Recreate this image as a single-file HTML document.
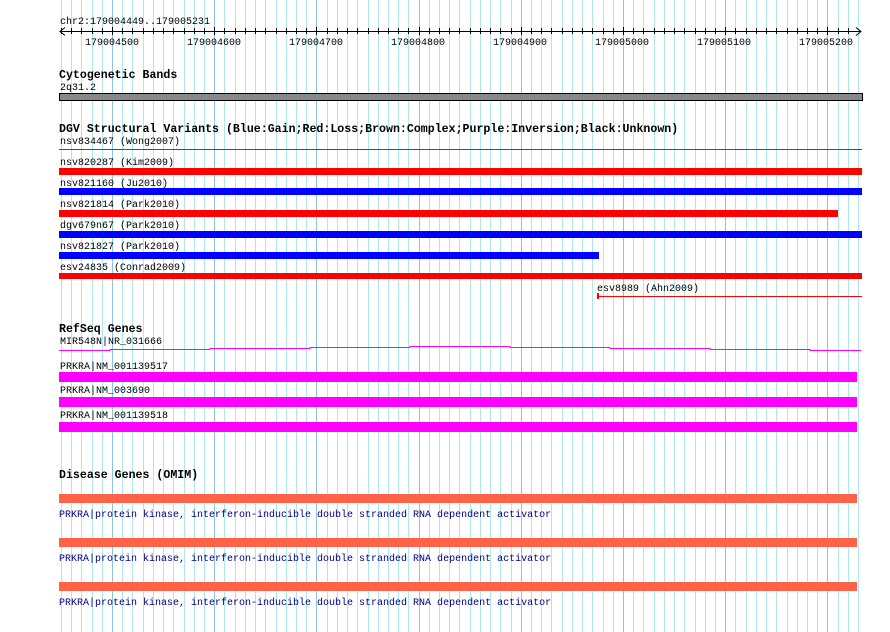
<!DOCTYPE html>
<html><head><meta charset="utf-8"><style>
html,body{margin:0;padding:0;background:#fff;width:890px;height:632px;overflow:hidden}
svg{display:block}
text{font-family:"Liberation Mono","DejaVu Sans Mono",monospace;font-size:10px;fill:#000}
.h{font-weight:bold;font-size:11.6px}
.d{fill:#000080}
</style></head><body>
<svg width="890" height="632" xmlns="http://www.w3.org/2000/svg">
<path stroke="#aee8ee" stroke-width="1" fill="none" d="M61.5 0V632M71.5 0V632M81.5 0V632M92.5 0V632M102.5 0V632M122.5 0V632M132.5 0V632M143.5 0V632M153.5 0V632M163.5 0V632M173.5 0V632M184.5 0V632M194.5 0V632M204.5 0V632M224.5 0V632M235.5 0V632M245.5 0V632M255.5 0V632M265.5 0V632M276.5 0V632M286.5 0V632M296.5 0V632M306.5 0V632M327.5 0V632M337.5 0V632M347.5 0V632M357.5 0V632M368.5 0V632M378.5 0V632M388.5 0V632M398.5 0V632M408.5 0V632M429.5 0V632M439.5 0V632M449.5 0V632M459.5 0V632M470.5 0V632M480.5 0V632M490.5 0V632M500.5 0V632M511.5 0V632M531.5 0V632M541.5 0V632M551.5 0V632M562.5 0V632M572.5 0V632M582.5 0V632M592.5 0V632M603.5 0V632M613.5 0V632M633.5 0V632M643.5 0V632M654.5 0V632M664.5 0V632M674.5 0V632M684.5 0V632M695.5 0V632M705.5 0V632M715.5 0V632M735.5 0V632M746.5 0V632M756.5 0V632M766.5 0V632M776.5 0V632M787.5 0V632M797.5 0V632M807.5 0V632M817.5 0V632M838.5 0V632M848.5 0V632M858.5 0V632"/>
<path stroke="#8cc4e4" stroke-width="1" fill="none" d="M112.5 0V632M214.5 0V632M316.5 0V632M419.5 0V632M521.5 0V632M623.5 0V632M725.5 0V632M827.5 0V632"/>
<path stroke="#000" stroke-width="1" fill="none" d="M61.5 28V34M71.5 28V34M81.5 28V34M92.5 28V34M102.5 28V34M112.5 27V35M122.5 28V34M132.5 28V34M143.5 28V34M153.5 28V34M163.5 28V34M173.5 28V34M184.5 28V34M194.5 28V34M204.5 28V34M214.5 27V35M224.5 28V34M235.5 28V34M245.5 28V34M255.5 28V34M265.5 28V34M276.5 28V34M286.5 28V34M296.5 28V34M306.5 28V34M316.5 27V35M327.5 28V34M337.5 28V34M347.5 28V34M357.5 28V34M368.5 28V34M378.5 28V34M388.5 28V34M398.5 28V34M408.5 28V34M419.5 27V35M429.5 28V34M439.5 28V34M449.5 28V34M459.5 28V34M470.5 28V34M480.5 28V34M490.5 28V34M500.5 28V34M511.5 28V34M521.5 27V35M531.5 28V34M541.5 28V34M551.5 28V34M562.5 28V34M572.5 28V34M582.5 28V34M592.5 28V34M603.5 28V34M613.5 28V34M623.5 27V35M633.5 28V34M643.5 28V34M654.5 28V34M664.5 28V34M674.5 28V34M684.5 28V34M695.5 28V34M705.5 28V34M715.5 28V34M725.5 27V35M735.5 28V34M746.5 28V34M756.5 28V34M766.5 28V34M776.5 28V34M787.5 28V34M797.5 28V34M807.5 28V34M817.5 28V34M827.5 27V35M838.5 28V34M848.5 28V34"/>
<text x="60" y="24">chr2:179004449..179005231</text>
<line x1="60" y1="31.5" x2="861" y2="31.5" stroke="#000"/>
<polyline points="65,27.5 60,31.5 65,35.5" fill="none" stroke="#000"/>
<polyline points="856,27.5 861,31.5 856,35.5" fill="none" stroke="#000"/>
<text x="85" y="45">179004500</text><text x="187" y="45">179004600</text><text x="289" y="45">179004700</text><text x="391" y="45">179004800</text><text x="493" y="45">179004900</text><text x="595" y="45">179005000</text><text x="697" y="45">179005100</text><text x="799" y="45">179005200</text>
<text class="h" x="59" y="78">Cytogenetic Bands</text>
<text x="60" y="90">2q31.2</text>
<rect x="59.5" y="93.5" width="803" height="7" fill="#888" stroke="#000"/>
<text class="h" x="59" y="132">DGV Structural Variants (Blue:Gain;Red:Loss;Brown:Complex;Purple:Inversion;Black:Unknown)</text>
<text x="60" y="144">nsv834467 (Wong2007)</text>
<rect x="59" y="149" width="803" height="1" fill="#f00"/>
<text x="60" y="165">nsv820287 (Kim2009)</text>
<rect x="59" y="168" width="803" height="7" fill="#f00"/>
<text x="60" y="186">nsv821160 (Ju2010)</text>
<rect x="59" y="188" width="803" height="7" fill="#00f"/>
<text x="60" y="207">nsv821814 (Park2010)</text>
<rect x="59" y="210" width="779" height="7" fill="#f00"/>
<text x="60" y="228">dgv679n67 (Park2010)</text>
<rect x="59" y="231" width="803" height="7" fill="#00f"/>
<text x="60" y="249">nsv821827 (Park2010)</text>
<rect x="59" y="252" width="540" height="7" fill="#00f"/>
<text x="60" y="270">esv24835 (Conrad2009)</text>
<rect x="59" y="273" width="803" height="6" fill="#f00"/>
<text x="597" y="291">esv8989 (Ahn2009)</text>
<rect x="597" y="296" width="265" height="1" fill="#f00"/>
<rect x="597" y="293" width="2" height="6" fill="#f00"/>
<text class="h" x="59" y="332">RefSeq Genes</text>
<text x="60" y="344">MIR548N|NR_031666</text>
<polyline points="59,350.5 110,350.5 110,349.5 210,349.5 210,348.5 310,348.5 310,347.5 410,347.5 410,346.5 510,346.5 510,347.5 610,347.5 610,348.5 710,348.5 710,349.5 810,349.5 810,350.5 861,350.5" fill="none" stroke="#f0f" stroke-width="1"/>
<text x="60" y="369">PRKRA|NM_001139517</text>
<rect x="59" y="372" width="798" height="10" fill="#f0f"/>
<text x="60" y="393">PRKRA|NM_003690</text>
<rect x="59" y="397" width="798" height="10" fill="#f0f"/>
<text x="60" y="418">PRKRA|NM_001139518</text>
<rect x="59" y="422" width="798" height="10" fill="#f0f"/>
<text class="h" x="59" y="478">Disease Genes (OMIM)</text>
<rect x="59" y="494" width="798" height="9" fill="#ff6347"/>
<text class="d" x="59" y="517">PRKRA|protein kinase, interferon-inducible double stranded RNA dependent activator</text>
<rect x="59" y="538" width="798" height="9" fill="#ff6347"/>
<text class="d" x="59" y="561">PRKRA|protein kinase, interferon-inducible double stranded RNA dependent activator</text>
<rect x="59" y="582" width="798" height="9" fill="#ff6347"/>
<text class="d" x="59" y="605">PRKRA|protein kinase, interferon-inducible double stranded RNA dependent activator</text>
</svg>
</body></html>
